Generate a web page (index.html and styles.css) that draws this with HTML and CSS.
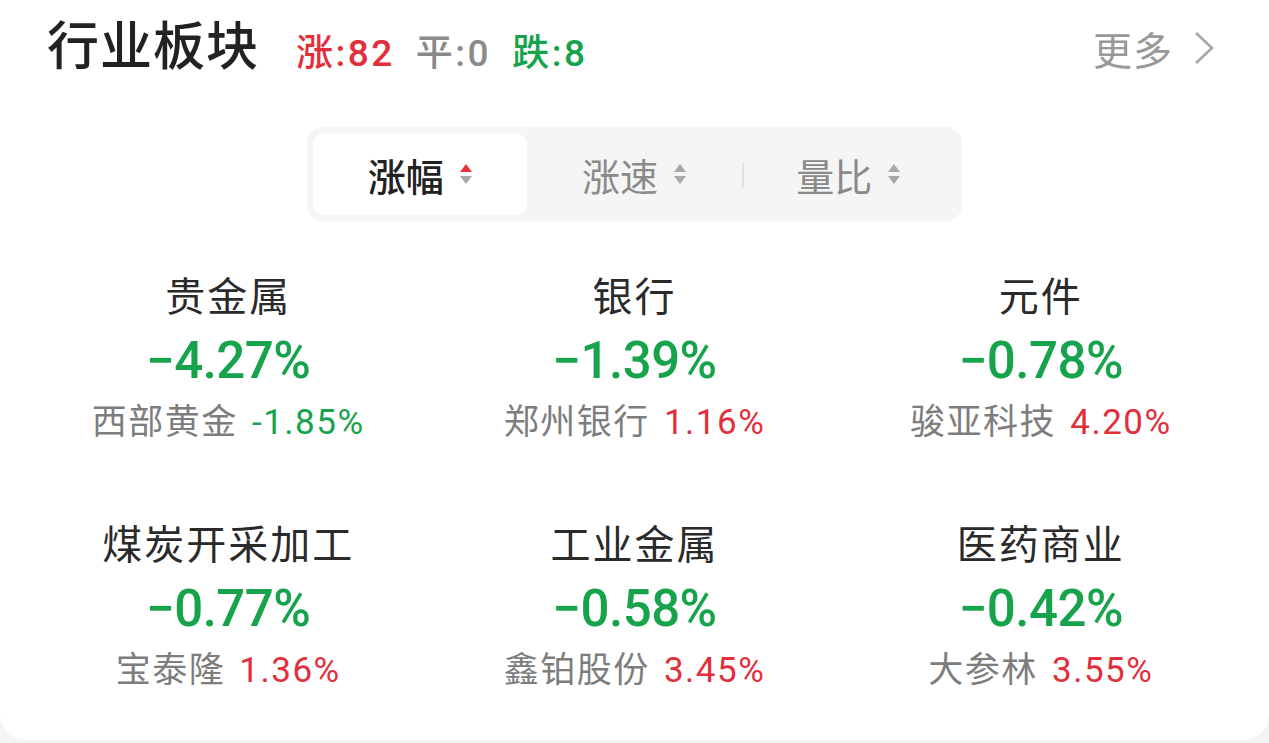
FILE: index.html
```html
<!DOCTYPE html>
<html lang="zh-CN">
<head>
<meta charset="UTF-8">
<meta name="viewport" content="width=device-width, initial-scale=1.0">
<title>行业板块</title>
<link rel="stylesheet" href="styles.css">
</head>
<body>
<div class="card">
  <div class="header">
    <h1 class="title">行业板块</h1>
    <div class="counts">
      <span class="up">涨:82</span>
      <span class="flat">平:0</span>
      <span class="down">跌:8</span>
    </div>
    <div class="more">
      更多
      <svg class="chevron" width="22" height="36" viewBox="0 0 22 36">
        <polyline points="3,3 19,18 3,33" fill="none" stroke="#a8a8a8" stroke-width="2.6"/>
      </svg>
    </div>
  </div>

  <div class="tabs">
    <div class="tab active">
      涨幅
      <svg class="sort" width="14" height="24" viewBox="0 0 14 24">
        <polygon points="7,2 13,10 1,10" fill="#e4303d"/>
        <polygon points="1,14 13,14 7,22" fill="#a8a8a8"/>
      </svg>
    </div>
    <div class="tab">
      涨速
      <svg class="sort" width="14" height="24" viewBox="0 0 14 24">
        <polygon points="7,2 13,10 1,10" fill="#a8a8a8"/>
        <polygon points="1,14 13,14 7,22" fill="#a8a8a8"/>
      </svg>
    </div>
    <div class="tab divided">
      量比
      <svg class="sort" width="14" height="24" viewBox="0 0 14 24">
        <polygon points="7,2 13,10 1,10" fill="#a8a8a8"/>
        <polygon points="1,14 13,14 7,22" fill="#a8a8a8"/>
      </svg>
    </div>
  </div>

  <div class="grid">
    <div class="cell">
      <div class="name">贵金属</div>
      <div class="pct down">−4.27%</div>
      <div class="lead">西部黄金 <span class="down">-1.85%</span></div>
    </div>
    <div class="cell">
      <div class="name">银行</div>
      <div class="pct down">−1.39%</div>
      <div class="lead">郑州银行 <span class="up">1.16%</span></div>
    </div>
    <div class="cell">
      <div class="name">元件</div>
      <div class="pct down">−0.78%</div>
      <div class="lead">骏亚科技 <span class="up">4.20%</span></div>
    </div>
    <div class="cell">
      <div class="name">煤炭开采加工</div>
      <div class="pct down">−0.77%</div>
      <div class="lead">宝泰隆 <span class="up">1.36%</span></div>
    </div>
    <div class="cell">
      <div class="name">工业金属</div>
      <div class="pct down">−0.58%</div>
      <div class="lead">鑫铂股份 <span class="up">3.45%</span></div>
    </div>
    <div class="cell">
      <div class="name">医药商业</div>
      <div class="pct down">−0.42%</div>
      <div class="lead">大参林 <span class="up">3.55%</span></div>
    </div>
  </div>
</div>
</body>
</html>
```

FILE: styles.css
```css
body {
  margin: 0;
  background: #f4f4f4;
  font-family: Roboto, "Noto Sans CJK SC", sans-serif;
}
.card {
  height: 740px;
  background: #fff;
  border-radius: 0 0 26px 26px;
  overflow: hidden;
}
.header {
  display: flex;
  align-items: center;
  height: 96px;
  padding: 0 54px 0 47px;
}
.title {
  margin: 0;
  font-size: 52px;
  font-weight: 500;
  letter-spacing: 1px;
  color: #222;
  line-height: 1;
}
.counts {
  display: flex;
  gap: 21px;
  margin-left: 37px;
  margin-top: 4px;
  font-size: 37px;
  font-weight: 500;
  letter-spacing: 2.5px;
}
.flat {
  color: #8a8a8a;
}
.up {
  color: #e12f3c;
}
.down {
  color: #16a34c;
}
.more {
  display: flex;
  align-items: center;
  gap: 20px;
  margin-left: auto;
  font-size: 39px;
  letter-spacing: 1px;
  color: #999;
}
.tabs {
  display: flex;
  width: 643px;
  margin: 31px auto 0;
  padding: 6px;
  background: #f5f5f5;
  border-radius: 16px;
}
.tab {
  flex: 1;
  display: flex;
  align-items: center;
  justify-content: center;
  gap: 15px;
  height: 82px;
  font-size: 38px;
  color: #8a8a8a;
  position: relative;
}
.tab.active {
  background: #fff;
  border-radius: 12px;
  color: #222;
  font-weight: 500;
}
.divided::before {
  content: "";
  position: absolute;
  left: 0;
  top: 30px;
  width: 2px;
  height: 25px;
  background: #e2e2e2;
}
.grid {
  display: grid;
  grid-template-columns: repeat(3, 1fr);
  row-gap: 74px;
  margin-top: 52px;
  padding: 0 25px;
  text-align: center;
}
.name {
  height: 50px;
  line-height: 50px;
  font-size: 40px;
  letter-spacing: 2px;
  color: #2a2a2a;
}
.pct {
  height: 76px;
  line-height: 76px;
  font-size: 51px;
  font-weight: 500;
  letter-spacing: -0.5px;
}
.lead {
  height: 48px;
  line-height: 48px;
  font-size: 35px;
  letter-spacing: 1.5px;
  color: #7d7d7d;
}
.lead span {
  margin-left: 4px;
}
```
